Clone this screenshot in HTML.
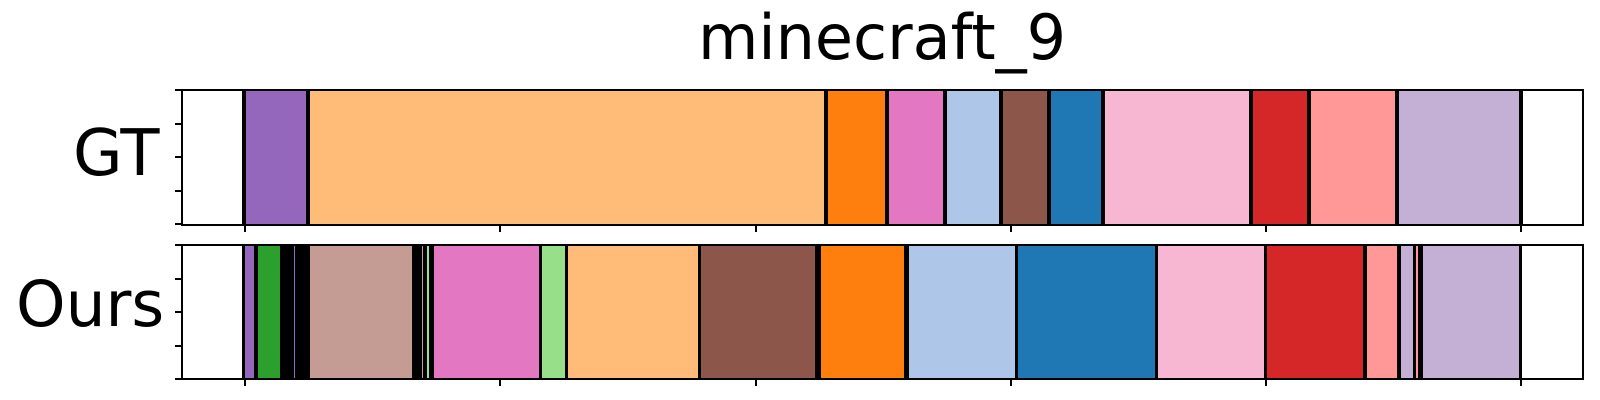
<!DOCTYPE html>
<html><head><style>
html,body{margin:0;padding:0;background:#fff;width:1600px;height:400px;overflow:hidden;position:relative;font-family:"DejaVu Sans","Liberation Sans",sans-serif}
.t{position:absolute;color:#000;white-space:nowrap;line-height:1}
.ax{position:absolute;left:181px;width:1403px;border:2px solid #000;box-sizing:border-box;background:#fff;overflow:hidden}
.s{position:absolute;top:0;bottom:0}
.k{position:absolute;background:#000}
</style></head><body>
<div class="t" style="left:698px;top:7px;font-size:62px;">minecraft_9</div>
<div class="t" style="left:73px;top:122px;font-size:64px;">GT</div>
<div class="t" style="left:16px;top:273px;font-size:63px;">Ours</div>

<div class="ax" id="a1" style="top:89px;height:137px"></div>
<div class="ax" id="a2" style="top:244px;height:136px"></div>
<div id="ticks"></div>
<script>
function seg(ax,segs){
  var a=document.getElementById(ax);
  segs.forEach(function(s){
    var d=document.createElement('div');d.className='s';
    d.style.left=(s[0]-183)+'px';d.style.width=(s[1]-s[0])+'px';d.style.background=s[2];
    a.appendChild(d);
  });
}
function line(ax,x,w){
  var a=document.getElementById(ax);
  var d=document.createElement('div');d.className='s';
  d.style.left=(x-183)+'px';d.style.width=(w||4)+'px';d.style.background='#000';a.appendChild(d);
}
seg('a1',[[244,308,'#9467bd'],[308,826,'#ffbb78'],[826,887,'#ff7f0e'],[887,945,'#e377c2'],[945,1001,'#aec7e8'],[1001,1049,'#8c564b'],[1049,1103,'#1f77b4'],[1103,1251,'#f7b6d2'],[1251,1309,'#d62728'],[1309,1397,'#ff9896'],[1397,1521,'#c5b0d5']]);
[242,306,824,885,943,999,1047,1101,1249,1307,1395,1519].forEach(function(x){line('a1',x);});
seg('a2',[[244,254,'#9467bd'],[254,258,'#000'],[258,280,'#2ca02c'],[280,309,'#000'],[294,295,'#9467bd'],[309,414,'#c49c94'],[414,433,'#000'],[427,429,'#98df8a'],[422,423,'#c49c94'],[433,541,'#e377c2'],[541,567,'#98df8a'],[567,700,'#ffbb78'],[700,815,'#8c564b'],[815,821,'#000'],[821,904,'#ff7f0e'],[904,909,'#000'],[909,1017,'#aec7e8'],[1017,1157,'#1f77b4'],[1157,1266,'#f7b6d2'],[1266,1363,'#d62728'],[1363,1367,'#000'],[1367,1397,'#ff9896'],[1397,1401,'#000'],[1401,1413,'#c5b0d5'],[1413,1423,'#000'],[1416,1418,'#ff9896'],[1423,1519,'#c5b0d5'],[1519,1522,'#000']]);
[242,307,412,431,539,565,698,1015,1155,1264].forEach(function(x){line('a2',x,3);});
var t=document.getElementById('ticks'),h='';
[90,124,157,191,224,245,279,312,346,379].forEach(function(y){h+='<div class="k" style="left:175px;top:'+(y-1)+'px;width:7px;height:2px"></div>';});
[245,500,756,1011,1266,1521].forEach(function(x){
  h+='<div class="k" style="left:'+(x-1)+'px;top:225px;width:2px;height:7px"></div>';
  h+='<div class="k" style="left:'+(x-1)+'px;top:379px;width:2px;height:7px"></div>';
});
t.innerHTML=h;
</script>
</body></html>
